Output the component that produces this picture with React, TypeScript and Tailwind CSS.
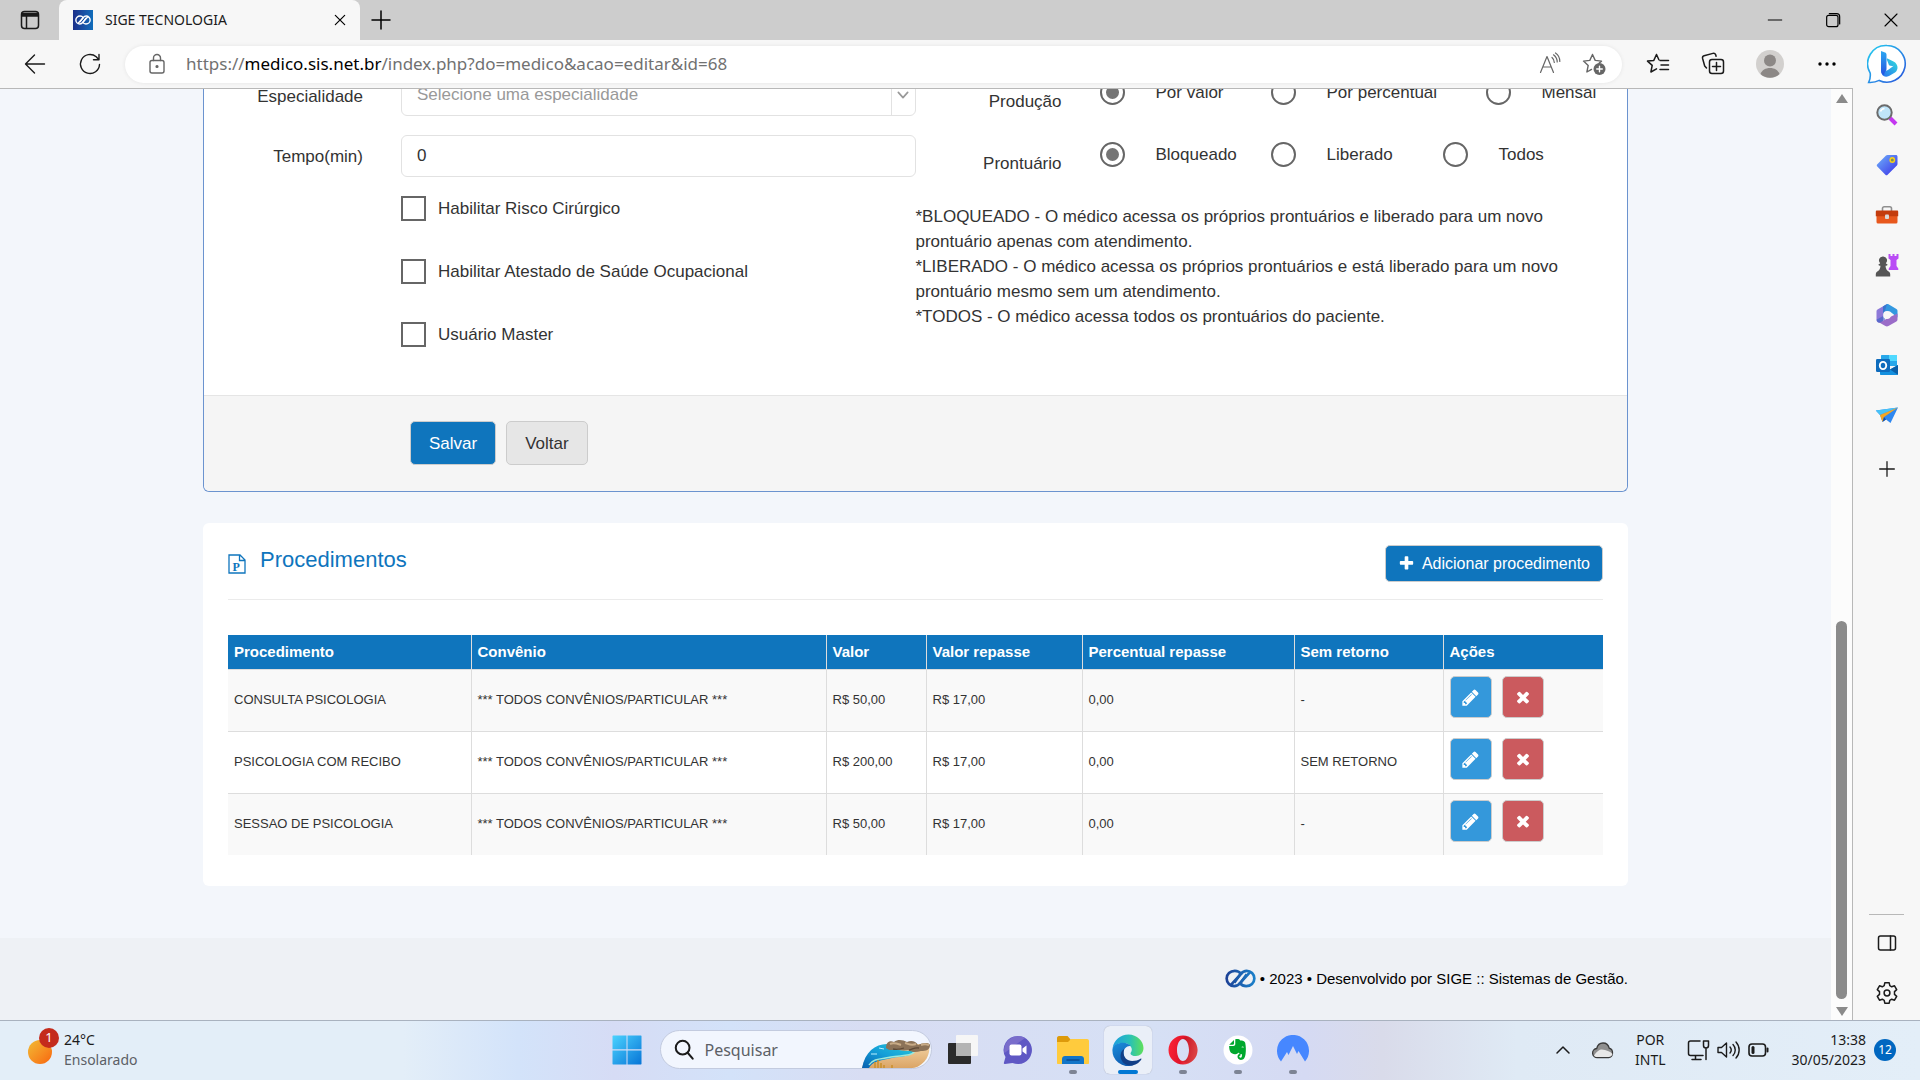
import type { ReactNode } from 'react';

const radioRows = [
  {
    name: 'producao',
    label: 'Produção',
    options: [
      { text: 'Por valor', width: 'w-[171px]' },
      { text: 'Por percentual', width: 'w-[215px]' },
      { text: 'Mensal', width: '' },
    ],
  },
  {
    name: 'prontuario',
    label: 'Prontuário',
    options: [
      { text: 'Bloqueado', width: 'w-[171px]' },
      { text: 'Liberado', width: 'w-[172px]' },
      { text: 'Todos', width: '' },
    ],
  },
];

const checks = [
  { id: 'risco', text: 'Habilitar Risco Cirúrgico' },
  { id: 'atestado', text: 'Habilitar Atestado de Saúde Ocupacional' },
  { id: 'master', text: 'Usuário Master' },
];

const columns = [
  { title: 'Procedimento', width: 'w-[243px]' },
  { title: 'Convênio', width: 'w-[355px]' },
  { title: 'Valor', width: 'w-[100px]' },
  { title: 'Valor repasse', width: 'w-[156px]' },
  { title: 'Percentual repasse', width: 'w-[212px]' },
  { title: 'Sem retorno', width: 'w-[149px]' },
  { title: 'Ações', width: '' },
];

const rows = [
  ['CONSULTA PSICOLOGIA', '*** TODOS CONVÊNIOS/PARTICULAR ***', 'R$ 50,00', 'R$ 17,00', '0,00', '-'],
  ['PSICOLOGIA COM RECIBO', '*** TODOS CONVÊNIOS/PARTICULAR ***', 'R$ 200,00', 'R$ 17,00', '0,00', 'SEM RETORNO'],
  ['SESSAO DE PSICOLOGIA', '*** TODOS CONVÊNIOS/PARTICULAR ***', 'R$ 50,00', 'R$ 17,00', '0,00', '-'],
];

/* ---------- Icons ---------- */

function Line({ size = 24, width = 1.3, className = '', children }: { size?: number; width?: number; className?: string; children: ReactNode }) {
  return (
    <svg
      width={size}
      height={size}
      viewBox="0 0 24 24"
      fill="none"
      stroke="currentColor"
      strokeWidth={width}
      strokeLinecap="round"
      strokeLinejoin="round"
      className={`shrink-0 ${className}`}
    >
      {children}
    </svg>
  );
}

function Awesome({ d, size }: { d: string; size: number }) {
  return (
    <svg width={size} height={size} viewBox="0 0 1792 1792" fill="currentColor" className="shrink-0">
      <path d={d} />
    </svg>
  );
}

const PENCIL =
  'M491 1536l91-91-235-235-91 91v107h128v128h107zm523-928q0-22-22-22-10 0-17 7l-542 542q-7 7-7 17 0 22 22 22 10 0 17-7l542-542q7-7 7-17zm-54-192l416 416-832 832h-416v-416zm683 96q0 53-37 90l-166 166-416-416 166-165q36-38 90-38 53 0 91 38l235 234q37 39 37 91z';
const TIMES =
  'M1490 1322q0 40-28 68l-136 136q-28 28-68 28t-68-28l-294-294-294 294q-28 28-68 28t-68-28l-136-136q-28-28-28-68t28-68l294-294-294-294q-28-28-28-68t28-68l136-136q28-28 68-28t68 28l294 294 294-294q28-28 68-28t68 28l136 136q28 28 28 68t-28 68l-294 294 294 294q28 28 28 68z';
const PLUS =
  'M1600 736v192q0 40-28 68t-68 28h-416v416q0 40-28 68t-68 28h-192q-40 0-68-28t-28-68v-416h-416q-40 0-68-28t-28-68v-192q0-40 28-68t68-28h416v-416q0-40 28-68t68-28h192q40 0 68 28t28 68v416h416q40 0 68 28t28 68z';

function SigeMark({ stroke, width, height }: { stroke: string; width: number; height: number }) {
  return (
    <svg width={width} height={height} viewBox="0 0 30 18" fill="none" stroke={stroke} strokeWidth="2.6" className="shrink-0">
      <defs>
        <linearGradient id="sige" x1="0" y1="0" x2="30" y2="0" gradientUnits="userSpaceOnUse">
          <stop offset="0" stopColor="#1c3f94" />
          <stop offset="1" stopColor="#1b83cc" />
        </linearGradient>
      </defs>
      <path d="M5.500 15.500 15.500 4.500C14 2.500 12 1.600 9.500 1.600 5 1.600 1.600 4.800 1.600 9S5 16.400 9 16.400c3 0 4.600-1.500 6-3.100L21 4.900" />
      <path d="M24.500 2.500 14.500 13.500c1.500 2 3.500 2.900 6 2.900 4.500 0 7.900-3.200 7.900-7.400S25 1.600 21 1.600c-3 0-4.600 1.500-6 3.100L9 13.100" />
    </svg>
  );
}

const BackIcon = () => (
  <Line size={24} width={1.4}>
    <path d="M21.500 12H3M11.500 3 2.500 12l9 9" />
  </Line>
);

const RefreshIcon = () => (
  <Line size={24} width={1.4}>
    <path d="M21.500 12.500a9.500 9.500 0 1 1-3.300-7.700l2.500 2.700M21 2.500v5.300h-5.500" />
  </Line>
);

const LockIcon = () => (
  <Line size={24} width={1.4} className="text-[#666]">
    <rect x="5" y="8.500" width="14" height="12.500" rx="2" />
    <path d="M8.500 8.500V6a3.500 3.500 0 0 1 7 0v2.500" />
    <circle cx="12" cy="14.500" r="0.900" fill="currentColor" />
  </Line>
);

const ReadAloudIcon = () => (
  <Line size={24} width={1.2} className="text-[#666]">
    <path d="m2.500 20.500 6.500-16 6.500 16M4.800 15h8.400" />
    <path d="M14 5.500c1.500 1.300 2.300 3 2.300 5M15.500 2.800c2.300 1.700 3.700 4.300 3.700 7.200M17.500 1c2.800 1.900 4.300 5 4.300 8.500" />
  </Line>
);

const StarAddIcon = () => (
  <Line size={24} width={1.4} className="text-[#666]">
    <path d="m10.500 2.500 2.700 5.900 6.300.7-2.500 2.200M10.500 2.500 7.800 8.400l-6.300.7 4.700 4.300-1.300 6.600 4.600-2.600" />
    <circle cx="17.500" cy="17" r="6" fill="#666" stroke="none" />
    <path d="M17.500 14.200v5.600M14.700 17h5.600" stroke="#fff" />
  </Line>
);

const FavoritesIcon = () => (
  <Line size={24} width={1.5}>
    <path d="m10.500 2.500 2.400 5.200M10.500 2.500 7.800 8.400l-6.300.7 4.700 4.300-1.300 6.600 5.600-3.200" />
    <path d="M14 8.500h8.500M15 13h7.500M14 17.500h8.500" />
  </Line>
);

const CollectionsIcon = () => (
  <Line size={24} width={1.5}>
    <rect x="8.500" y="7.500" width="14" height="14" rx="2.500" />
    <path d="M15.500 10.500v8M11.500 14.500h8" />
    <path d="m5.500 16-1.800-2L1.600 6.500c-.3-1.300.3-2.400 1.500-2.700l8.800-2.400c1.200-.3 2.300.2 2.800 1.400l.4 1.500" />
  </Line>
);

const Avatar = () => (
  <svg width="28" height="28" viewBox="0 0 28 28" className="shrink-0">
    <circle cx="14" cy="14" r="14" fill="#d2d0ce" />
    <circle cx="14" cy="10.500" r="6" fill="#8c8886" />
    <path d="M4.500 24c1.500-4 5-6 9.500-6s8 2 9.500 6a14 14 0 0 1-19 0z" fill="#8c8886" />
  </svg>
);

const BingIcon = () => (
  <svg width="40" height="40" viewBox="0 0 40 40">
    <defs>
      <linearGradient id="bingRing" x1="0" y1="0" x2="1" y2="1">
        <stop offset="0" stopColor="#25d0f0" />
        <stop offset="1" stopColor="#2a52dc" />
      </linearGradient>
      <linearGradient id="bingStem" x1="0" y1="0" x2="0" y2="1">
        <stop offset="0" stopColor="#2aa8f2" />
        <stop offset="1" stopColor="#2553e0" />
      </linearGradient>
      <linearGradient id="bingBowl" x1="0" y1="1" x2="1" y2="0">
        <stop offset="0" stopColor="#2a6ff0" />
        <stop offset="1" stopColor="#30dfdc" />
      </linearGradient>
    </defs>
    <path d="M20 1.500a18.300 18.300 0 1 1-7.800 34.900c-3 1.600-6.700 2.200-10.500 2 1.300-2.800 1.900-6 1.500-9.300A18.300 18.300 0 0 1 20 1.500z" fill="#fff" stroke="url(#bingRing)" strokeWidth="1.600" />
    <path d="M14.300 27c3 1.500 6.700-.5 12.700-5.500-1.500 1-3.500.5-5-.3l-2.200-5.700c-.3-1 .3-1.200 1.200-.8l5.500 2.700c5 2.600 5.200 8.300 1.500 11.200L22 32c-4.500 2-7.700-.5-7.700-5z" fill="url(#bingBowl)" />
    <path d="m14 7 4 1.600c1 .4 1.500 1.200 1.500 2.300v14.300c0 2-2.500 3-2.500 5.800-2-.6-3-2-3-4.500z" fill="url(#bingStem)" />
  </svg>
);

const LoupeIcon = () => (
  <svg width="24" height="24" viewBox="0 0 24 24">
    <path d="m15 15 6 6" stroke="#c437f0" strokeWidth="4" />
    <circle cx="9.500" cy="9.500" r="7.200" fill="#bfe5fa" stroke="#6b6b6b" strokeWidth="2" />
    <path d="M5.500 8.500a4.500 4.500 0 0 1 4-3" stroke="#fff" strokeWidth="1.500" fill="none" />
  </svg>
);

const TagIcon = () => (
  <svg width="24" height="24" viewBox="0 0 24 24">
    <defs>
      <linearGradient id="tag" x1="0" y1="0" x2="1" y2="1">
        <stop offset="0" stopColor="#6fb4fb" />
        <stop offset="1" stopColor="#3a2ee6" />
      </linearGradient>
    </defs>
    <path d="M12.500 2h8.300c1 0 1.700.7 1.700 1.700V11c0 .6-.2 1-.6 1.400l-9.300 9.300c-.7.7-1.500.7-2.200 0L2.300 13.500c-.7-.7-.7-1.500 0-2.200L11 2.600c.4-.4.9-.6 1.500-.6z" fill="url(#tag)" />
    <circle cx="17.300" cy="7" r="2.200" fill="#7c8f5c" stroke="#fcd116" strokeWidth="1.400" />
  </svg>
);

const BriefcaseIcon = () => (
  <svg width="24" height="24" viewBox="0 0 24 24">
    <path d="M7.500 8V5.500c0-1 .7-1.700 1.700-1.700h5.600c1 0 1.700.7 1.700 1.700V8" fill="none" stroke="#8f8f8f" strokeWidth="1.600" />
    <rect x="1.500" y="10" width="21" height="10.500" rx="1.500" fill="#e8581d" />
    <path d="M2 7.500h20c.8 0 1.200.5 1.200 1.200v4.600H.8V8.700c0-.7.4-1.200 1.200-1.200z" fill="#c33c0d" />
    <rect x="10" y="11.500" width="4" height="4.500" rx="1" fill="#d9d9d9" />
  </svg>
);

const ChessIcon = () => (
  <svg width="24" height="24" viewBox="0 0 24 24">
    <path d="M13.500 1h2v2h2V1h2v2h2V1h2v4.500l-2 1.500v6l1.800 2.500V17h-9.600v-1.500l1.800-2.500V7l-2-1.500z" fill="#b94cf5" />
    <path d="M8 3.500a4 4 0 0 1 2.800 7c.7.3 1.700.5 1.700 1.300 0 .9-1 1-2 1 .2 3 1.300 4.700 3.500 5.900.8.5 1.200 1.300 1.200 2.300v2.500H.8V21c0-1 .4-1.800 1.200-2.300 2.200-1.200 3.300-2.900 3.500-5.900-1 0-2-.1-2-1 0-.8 1-1 1.700-1.300A4 4 0 0 1 8 3.500z" fill="#565656" />
  </svg>
);

const OfficeIcon = () => (
  <svg width="24" height="24" viewBox="0 0 24 24">
    <path d="M12 1 2.500 6.500c-.7.4-1 1-1 1.800v8.500c0 2.500 2.500 3.700 4.500 2.500l2-1.300V9.500z" fill="#8d79d8" />
    <path d="m12 1-4 2.500v9.500l4-4.500h3l7.500 6V7.800c0-.9-.4-1.500-1.100-1.900L13.500 1.300c-.5-.3-1-.4-1.500-.3z" fill="#3398e0" />
    <path d="M22.500 10.500v6c0 .9-.4 1.500-1.100 1.900l-8 4.600c-1 .6-2 .6-3 0L2.500 18.500c2 1 3.500.6 5-.4L16 13.500z" fill="#9a6cc8" />
    <path d="m8 3.500 4-2.300-2 6.300v9L6 19.300c-1.500.7-4 .2-4.500-2.500L8 13z" fill="#3d63c4" opacity="0.650" />
    <circle cx="12" cy="12" r="3.900" fill="#f7f7f7" />
  </svg>
);

const OutlookIcon = () => (
  <svg width="24" height="24" viewBox="0 0 24 24">
    <path d="M7 2h14c.6 0 1 .4 1 1v10H6V3c0-.6.4-1 1-1z" fill="#28a8ea" />
    <path d="M14 2h8v6h-8z" fill="#50d9ff" />
    <path d="M5 12.500 14 17l9-5v9c0 .6-.4 1-1 1H6c-.6 0-1-.4-1-1z" fill="#1490df" />
    <path d="m23 12-8 4.500 8 5.300z" fill="#0a5fa8" />
    <rect x="1" y="6" width="14" height="13" rx="1.300" fill="#0f6cbd" />
    <ellipse cx="8" cy="12.500" rx="3.200" ry="3.600" fill="none" stroke="#fff" strokeWidth="1.900" />
  </svg>
);

const PlaneIcon = () => (
  <svg width="24" height="24" viewBox="0 0 24 24">
    <path d="M.8 7.500 23 4.500 15.500 20l-4.500-3.500L7.500 19 5 12z" fill="#2e87f0" />
    <path d="M.8 7.500 23 4.500 5 12z" fill="#47c3f7" />
    <path d="m5 12 18-7.500L9 14l-1.500 5z" fill="#f5a623" />
    <path d="m9 14 2 2.500L7.500 19z" fill="#1b4fa0" />
  </svg>
);

const GearIcon = () => (
  <Line size={24} width={1.5}>
    <path d="M9.800 1.800h4.400l.6 2.900 1.900 1.100 2.800-1 2.200 3.800-2.200 2v2.800l2.200 2-2.200 3.800-2.800-1-1.900 1.100-.6 2.900H9.800l-.6-2.900-1.900-1.100-2.800 1-2.200-3.800 2.200-2v-2.800l-2.200-2 2.200-3.800 2.800 1 1.900-1.100z" />
    <circle cx="12" cy="12" r="2.900" />
  </Line>
);

/* ---------- Browser ---------- */

function TabBar() {
  return (
    <div className="flex h-10 shrink-0 items-stretch bg-[#cdcdcd]">
      <button aria-label="Guias" className="flex w-[59px] items-center justify-center rounded-br-md">
        <svg width="20" height="20" viewBox="0 0 20 20" fill="none" stroke="#1b1b1b" strokeWidth="1.500">
          <rect x="1.500" y="1.500" width="17" height="17" rx="3" />
          <path d="M2 3.500h16V6H2z" fill="#1b1b1b" />
          <path d="M6.500 6v12" />
        </svg>
      </button>
      <div className="flex w-[301px] items-center rounded-t-lg bg-[#f7f7f7] pl-[14px] pr-3">
        <span className="flex h-5 w-5 items-center justify-center bg-gradient-to-r from-[#1b2f8a] to-[#0f6dbb]">
          <SigeMark stroke="#fff" width={16} height={10} />
        </span>
        <span className="ml-3 flex-1 pb-px text-[14px] text-[#1b1b1b]">SIGE TECNOLOGIA</span>
        <button aria-label="Fechar guia">
          <Line size={16} width={1.8}>
            <path d="m5 5 14 14M19 5 5 19" />
          </Line>
        </button>
      </div>
      <button aria-label="Nova guia" className="flex w-[42px] items-center justify-center">
        <Line size={24} width={1.5}>
          <path d="M12 3v18M3 12h18" />
        </Line>
      </button>
      <div className="flex-1" />
      <button aria-label="Minimizar" className="flex w-[58px] items-center justify-center">
        <Line size={18} width={1.3}>
          <path d="M3 12h18" />
        </Line>
      </button>
      <button aria-label="Restaurar" className="flex w-[58px] items-center justify-center">
        <Line size={16} width={1.8}>
          <rect x="2.500" y="5" width="17" height="17" rx="3" />
          <path d="M6.500 2.500h11c2.500 0 4.500 2 4.500 4.500v11" />
        </Line>
      </button>
      <button aria-label="Fechar" className="flex w-[58px] items-center justify-center">
        <Line size={18} width={1.5}>
          <path d="m4 4 16 16M20 4 4 20" />
        </Line>
      </button>
    </div>
  );
}

function Toolbar() {
  return (
    <div className="flex h-[49px] shrink-0 items-center border-b border-[#b8b8b8] bg-[#f7f7f7] pl-[23px] text-[#1b1b1b]">
      <button aria-label="Voltar página">
        <BackIcon />
      </button>
      <button aria-label="Atualizar" className="ml-[31px]">
        <RefreshIcon />
      </button>
      <div className="ml-[23px] flex h-[37px] flex-1 items-center rounded-full bg-white pl-5 pr-4 shadow-[0_0_4px_rgba(0,0,0,0.08)]">
        <LockIcon />
        <a href="#url" className="ml-[17px] flex-1 pb-px text-[17px] text-[#717171]">
          https://<span className="text-black">medico.sis.net.br</span>/index.php?do=medico&amp;acao=editar&amp;id=68
        </a>
        <button aria-label="Ler em voz alta" className="mr-5">
          <ReadAloudIcon />
        </button>
        <button aria-label="Adicionar aos favoritos">
          <StarAddIcon />
        </button>
      </div>
      <button aria-label="Favoritos" className="ml-6">
        <FavoritesIcon />
      </button>
      <button aria-label="Coleções" className="ml-[31px]">
        <CollectionsIcon />
      </button>
      <button aria-label="Perfil" className="ml-[31px]">
        <Avatar />
      </button>
      <button aria-label="Mais" className="ml-[31px] mr-[14px]">
        <svg width="24" height="24" viewBox="0 0 24 24">
          <circle cx="5" cy="12" r="1.700" />
          <circle cx="12" cy="12" r="1.700" />
          <circle cx="19" cy="12" r="1.700" />
        </svg>
      </button>
    </div>
  );
}

function EdgeSidebar() {
  return (
    <aside className="flex w-[67px] shrink-0 flex-col items-center bg-[#f7f7f7] pb-[15px] text-[#1b1b1b]">
      <button aria-label="Bing" className="mt-1">
        <BingIcon />
      </button>
      <div className="mt-[19px] flex flex-col gap-[26px]">
        <button aria-label="Pesquisar na barra"><LoupeIcon /></button>
        <button aria-label="Compras"><TagIcon /></button>
        <button aria-label="Ferramentas"><BriefcaseIcon /></button>
        <button aria-label="Jogos"><ChessIcon /></button>
        <button aria-label="Microsoft 365"><OfficeIcon /></button>
        <button aria-label="Outlook"><OutlookIcon /></button>
        <button aria-label="Drop"><PlaneIcon /></button>
      </div>
      <button aria-label="Personalizar" className="mt-[31px]">
        <Line size={22} width={1.4}>
          <path d="M12 4v16M4 12h16" />
        </Line>
      </button>
      <div className="flex-1" />
      <div className="h-px w-[35px] bg-[#b8b8b8]" />
      <button aria-label="Ocultar barra" className="mt-4">
        <Line size={24} width={1.5}>
          <rect x="3.500" y="5" width="17" height="14" rx="2" />
          <path d="M15.500 5v14" />
        </Line>
      </button>
      <button aria-label="Configurações" className="mt-[26px]">
        <GearIcon />
      </button>
    </aside>
  );
}

/* ---------- Page ---------- */

function DoctorForm() {
  return (
    <form className="rounded-b-md border border-t-0 border-[#6b93cf] bg-white">
      <div className="-mt-4 grid grid-cols-2 pb-12">
        <div className="flex flex-col gap-[19px]">
          <div className="flex items-center">
            <label htmlFor="especialidade" className="mr-[38px] w-[159px] pt-1 text-right">Especialidade</label>
            <div className="flex h-[43px] flex-1 rounded-md border border-[#e2e2e2]">
              <select id="especialidade" className="flex-1 appearance-none bg-transparent pl-[15px] text-[#999] outline-none">
                <option>Selecione uma especialidade</option>
              </select>
              <span className="flex w-6 items-center justify-center border-l border-[#e2e2e2] text-[#999]">
                <Line size={16} width={2.5}>
                  <path d="m5 8 7 8 7-8" />
                </Line>
              </span>
            </div>
          </div>
          <div className="flex items-center">
            <label htmlFor="tempo" className="mr-[38px] w-[159px] pt-px text-right">Tempo(min)</label>
            <input id="tempo" type="text" defaultValue="0" className="h-[42px] min-w-0 flex-1 rounded-md border border-[#e2e2e2] px-[15px] outline-none" />
          </div>
          <div className="ml-[197px] flex flex-col gap-[38px]">
            {checks.map((c) => (
              <label key={c.id} className="flex h-[25px] items-center gap-3">
                <input type="checkbox" id={c.id} className="h-[25px] w-[25px] appearance-none border-2 border-[#666] bg-white" />
                {c.text}
              </label>
            ))}
          </div>
        </div>
        <div>
          {radioRows.map((row) => (
            <fieldset key={row.name} className="flex h-[62px] items-start">
              <span className="mr-[38px] mt-4 w-[146px] text-right">{row.label}</span>
              {row.options.map((o, i) => (
                <label key={o.text} className={`flex h-[38px] shrink-0 items-center ${o.width}`}>
                  <input
                    type="radio"
                    name={row.name}
                    defaultChecked={i === 0}
                    className="mr-[31px] h-[25px] w-[25px] appearance-none rounded-full border-2 border-[#666] p-1 checked:bg-[#757575] checked:bg-clip-content"
                  />
                  {o.text}
                </label>
              ))}
            </fieldset>
          ))}
          <p className="mt-[7px]">
            *BLOQUEADO - O médico acessa os próprios prontuários e liberado para um novo
            <br />
            prontuário apenas com atendimento.
            <br />
            *LIBERADO - O médico acessa os próprios prontuários e está liberado para um novo
            <br />
            prontuário mesmo sem um atendimento.
            <br />
            *TODOS - O médico acessa todos os prontuários do paciente.
          </p>
        </div>
      </div>
      <div className="flex gap-[10px] rounded-b-md border-t border-[#e5e5e5] bg-[#f5f5f5] pb-[26px] pl-[206px] pt-[25px]">
        <button type="button" className="h-[44px] rounded-[5px] border border-[#ccc] bg-[#0f75bd] px-[18px] text-white">
          Salvar
        </button>
        <button type="button" className="h-[44px] rounded-[5px] border border-[#ccc] bg-[#e6e6e6] px-[18px] text-[#333]">
          Voltar
        </button>
      </div>
    </form>
  );
}

function Procedures() {
  return (
    <section className="mt-[31px] rounded-md bg-white px-[25px] pb-[31px] pt-[22px]">
      <div className="flex items-center border-b border-[#ebebeb] pb-[17px]">
        <svg width="18" height="20" viewBox="0 0 18 20" fill="none" stroke="#0f75bd" strokeWidth="1.300">
          <path d="M1 1h11l5 5v13H1zM11.500 1v5.500H17" />
          <text x="4.500" y="16.500" fontSize="12" fontWeight="bold" fontFamily="Liberation Serif" fill="#0f75bd" stroke="none">P</text>
        </svg>
        <h2 className="ml-[14px] flex-1 pb-2 text-[22px] text-[#0f75bd]">Procedimentos</h2>
        <button className="flex h-[37px] items-center gap-[7px] rounded-[5px] border border-[#ccc] bg-[#0f75bd] px-3 text-[16px] text-white">
          <Awesome d={PLUS} size={17} />
          Adicionar procedimento
        </button>
      </div>
      <table className="mt-[35px] w-full table-fixed border-collapse">
        <thead>
          <tr className="h-[34px] bg-[#0f75bd] text-left text-[15px] text-white">
            {columns.map((c) => (
              <th key={c.title} className={`border-l border-[#ddd] px-[6px] font-bold first:border-l-0 ${c.width}`}>
                {c.title}
              </th>
            ))}
          </tr>
        </thead>
        <tbody>
          {rows.map((row) => (
            <tr key={row[0]} className="h-[62px] border-t border-[#ddd] text-[13px] odd:bg-[#f9f9f9]">
              {row.map((cell, i) => (
                <td key={i} className="whitespace-nowrap border-l border-[#ddd] px-[6px] pb-[2px] first:border-l-0">
                  {cell}
                </td>
              ))}
              <td className="border-l border-[#ddd] px-[6px]">
                <div className="flex gap-[10px] pb-[6px] text-white">
                  <button aria-label="Editar" className="flex h-[42px] w-[42px] items-center justify-center rounded-[5px] border border-[#ccc] bg-[#3498db]">
                    <Awesome d={PENCIL} size={19} />
                  </button>
                  <button aria-label="Excluir" className="flex h-[42px] w-[42px] items-center justify-center rounded-[5px] border border-[#ccc] bg-[#cb5a5e]">
                    <Awesome d={TIMES} size={18} />
                  </button>
                </div>
              </td>
            </tr>
          ))}
        </tbody>
      </table>
    </section>
  );
}

function Scrollbar() {
  return (
    <div className="flex w-[21px] shrink-0 flex-col items-center bg-[#fcfcfc] pb-1 pt-[5px]">
      <svg width="12" height="9" viewBox="0 0 12 9" fill="#8b8b8b">
        <path d="M6 0 12 9H0z" />
      </svg>
      <div className="flex-[517]" />
      <div className="w-[11px] flex-[378] rounded-full bg-[#8b8b8b]" />
      <svg width="12" height="9" viewBox="0 0 12 9" fill="#8b8b8b" className="mt-2">
        <path d="M6 9 0 0h12z" />
      </svg>
    </div>
  );
}

/* ---------- Taskbar ---------- */

const WindowsIcon = () => (
  <svg width="30" height="30" viewBox="0 0 30 30">
    <defs>
      <linearGradient id="win" x1="0" y1="0" x2="30" y2="30" gradientUnits="userSpaceOnUse">
        <stop offset="0" stopColor="#4cd4ff" />
        <stop offset="1" stopColor="#0673d6" />
      </linearGradient>
    </defs>
    <path d="M1 .5h13.500v13.800H.5V1zM15.500.5H29l.5.5v13.300h-14zM.5 15.500h14v14H1l-.5-.5zM15.500 15.500h14V29l-.5.5H15.500z" fill="url(#win)" />
  </svg>
);

const BeachIcon = () => (
  <svg width="70" height="28" viewBox="0 0 70 28">
    <defs>
      <linearGradient id="sand" x1="0" y1="0" x2="0" y2="1">
        <stop offset="0" stopColor="#f3d3a4" />
        <stop offset="1" stopColor="#dba566" />
      </linearGradient>
      <linearGradient id="sea" x1="0" y1="1" x2="1" y2="0">
        <stop offset="0" stopColor="#0860b0" />
        <stop offset="0.500" stopColor="#149fd8" />
        <stop offset="1" stopColor="#28c8d8" />
      </linearGradient>
    </defs>
    <path d="M1 28C5 12 15 4 30 4h38c2 11-4 20-14 24z" fill="url(#sand)" />
    <path d="M1 28C4 12 14 4 26 4c3 4 9 7 27 7-3 6-12 5-22 7-9 2-20 3-23 10z" fill="url(#sea)" />
    <path d="M8 25c4-7 14-6 22-8 9-2 20 0 24-6" fill="none" stroke="#9ce8dc" strokeWidth="1.500" />
    <path d="M10 14h6M18 8l5 1" stroke="#b8f0ff" strokeWidth="1" />
    <path d="M25 8c0-5 3-8 8-6 4-3 9-2 13 0 4-2 9-1 11 3 4-2 11-3 12 0 0 5-4 6-9 6-4 1-8 2-13-1-5 1-9 0-12-1-4 2-8 1-10-1z" fill="#8c7358" />
    <path d="M29 4c4-2 8 0 11 1M44 3c4 1 6 3 11 1M60 5c3-1 5-1 8 0" stroke="#c8ab86" strokeWidth="2" fill="none" />
    <path d="M32 9c4 1 8 0 11-1M48 10c4-1 6-3 10-2" stroke="#5d4936" strokeWidth="1.300" fill="none" />
    <path d="M14 28v-6M17 28v-8M20 28v-5M23 28v-3M31 28v-3" stroke="#c88f2b" strokeWidth="1.500" />
  </svg>
);

const TaskViewIcon = () => (
  <svg width="30" height="30" viewBox="0 0 30 30">
    <rect x="0" y="8" width="23" height="21" rx="1" fill="#2b2b2b" />
    <rect x="8" y="0" width="22" height="21" rx="1" fill="#f6f6f6" />
    <path d="M8 8h15v13H8z" fill="#b4b4b4" />
  </svg>
);

const ChatIcon = () => (
  <svg width="30" height="30" viewBox="0 0 30 30">
    <path d="M15 1a14 14 0 1 1-5.500 26.900L2 29c-1 .1-1.400-.4-1.100-1.300L2.500 22A14 14 0 0 1 15 1z" fill="#5f58c4" />
    <path d="M15 1A14 14 0 0 0 1.500 18L22 3c-2-1.300-4.500-2-7-2z" fill="#8b7bd0" opacity="0.600" />
    <rect x="6.500" y="9.500" width="12" height="11" rx="2" fill="#fff" />
    <path d="m19.500 13.500 4-3v9l-4-3z" fill="#fff" />
  </svg>
);

const ExplorerIcon = () => (
  <svg width="32" height="30" viewBox="0 0 32 30">
    <path d="M0 3c0-1 .7-2 2-2h8.500l3.500 4v4H0z" fill="#dd9a0b" />
    <path d="M0 7h11l3-3h16c1.200 0 2 .8 2 2v22c0 .6-.4 1-1 1H1c-.6 0-1-.4-1-1z" fill="#ffcb3d" />
    <path d="M5 29v-5c0-1.700 1.300-3 3-3h16c1.700 0 3 1.300 3 3v5z" fill="#1275c8" />
    <path d="M10 25h12" stroke="#0a4b91" strokeWidth="1.500" strokeLinecap="round" />
  </svg>
);

const EdgeIcon = () => (
  <svg width="32" height="32" viewBox="0 0 32 32">
    <defs>
      <linearGradient id="edgeTop" x1="0" y1="0.500" x2="1" y2="0.500">
        <stop offset="0" stopColor="#1e9de0" />
        <stop offset="0.550" stopColor="#28c0b8" />
        <stop offset="1" stopColor="#5fe05a" />
      </linearGradient>
      <linearGradient id="edgeLeft" x1="0" y1="0" x2="0.500" y2="1">
        <stop offset="0" stopColor="#1b8fdc" />
        <stop offset="1" stopColor="#0f5bb0" />
      </linearGradient>
    </defs>
    <path d="M.6 14C2 6 8.500.5 16.500.5 25 .5 31.500 7 31.500 14c0 5-3.500 8-7.500 8-3.500 0-5.500-1.300-5.500-2.600 0-.9 1.300-1.500 1.300-3.900 0-3-3.300-6.500-8.300-6.500-5 0-9 2-10.900 5z" fill="url(#edgeTop)" />
    <path d="M.5 15C1 11 5.500 8.700 11 8.700c3.500 0 6.300 1.300 7.700 3.300-3.500-.7-7.200 2.300-7.200 7 0 6 4.500 11.300 10 12A15.500 15.500 0 0 1 .5 15z" fill="url(#edgeLeft)" />
    <path d="M11.600 18c-.4 5 3.500 9 8.500 9 3.500 0 6-1 8.400-2.300.7-.4 1.200.2.8.8-2.200 3.400-6 6-10.800 6C12 31.500 8 26 8.600 21c.3-3 1.700-5 3.500-6z" fill="#123f87" />
  </svg>
);

const OperaIcon = () => (
  <svg width="30" height="30" viewBox="0 0 30 30">
    <defs>
      <linearGradient id="opera" x1="0" y1="0" x2="1" y2="0.200">
        <stop offset="0" stopColor="#ff2638" />
        <stop offset="0.550" stopColor="#e0142a" />
        <stop offset="1" stopColor="#fb5a5a" />
      </linearGradient>
    </defs>
    <path d="M15 .5a14.500 14.500 0 1 0 0 29 14.500 14.500 0 1 0 0-29zm0 3.500c3.600 0 6 5 6 11s-2.400 11-6 11-6-5-6-11 2.400-11 6-11z" fill="url(#opera)" fillRule="evenodd" />
    <path d="M15 4c2-2 5-2.500 7.500-1.300C27 5.300 29.500 10 29.500 15s-2.500 9.700-7 12.300C20 28.500 17 28 15 26c3.600 0 6-5 6-11S18.600 4 15 4z" fill="#a01018" opacity="0.350" />
  </svg>
);

const EvernoteIcon = () => (
  <svg width="30" height="30" viewBox="0 0 30 30">
    <circle cx="15" cy="15" r="14.500" fill="#fff" />
    <path d="M11 5v3.500c0 .8-.5 1.200-1.200 1.200H6.200zM12.300 4.300c2-.5 4.200-.2 5 1.200 2.200 0 4.500.5 4.900 2.300.7 3.500.9 7.400.4 11-.5 3.700-1.600 6.200-4.700 6.200-2.400 0-3.400-1.700-3.400-3.400 0-1.600 1.200-2.900 2.900-2.900v2c-.8 0-1.100.4-1.100.9 0 .7.500 1.200 1.300 1.200 1 0 1.400-.9 1.400-3.800-1 .4-2.900.2-3.600-1.500-.7 1.300-2 1.900-3.500 1.700-4-.4-5.600-2.300-5.800-8.200h4.200c1.200 0 2-.8 2-2z" fill="#00a82d" />
    <path d="M18.300 12.300c.6-1 2.200-1 2.600.3z" fill="#fff" />
  </svg>
);

const NordIcon = () => (
  <svg width="32" height="30" viewBox="0 0 32 30">
    <path d="M4 26.500A16 16 0 1 1 28 26.500L21.500 16l-1.500 3-4-8-4.500 9-1.500-3z" fill="#4687ff" />
  </svg>
);

function TaskButton({ label, children, active = false, running = true }: { label: string; children: ReactNode; active?: boolean; running?: boolean }) {
  return (
    <button
      aria-label={label}
      className={`relative flex h-12 w-12 items-center justify-center rounded-md ${active ? 'bg-[#eaeff8] shadow-[0_0_1px_rgba(0,0,0,0.3)]' : ''}`}
    >
      {children}
      {running && (
        <span className={`absolute bottom-0 h-1 rounded-full ${active ? 'w-5 bg-[#0078d4]' : 'w-2 bg-[#7d8494]'}`} />
      )}
    </button>
  );
}

function Taskbar() {
  return (
    <footer className="grid h-[60px] shrink-0 grid-cols-[1fr_auto_1fr] items-center border-t border-[#a9b2bf] bg-[linear-gradient(90deg,#e3eef8_0%,#e3eef8_21%,#d3e3fa_27%,#d6dcf5_32%,#d3e2f9_38%,#d8ddf3_45%,#d6e0f5_60%,#d5daf3_68%,#d9dbea_72%,#dfeaf5_79%,#e3eef8_100%)] pb-[2px] text-[#1b1b1b]">
      <div className="flex items-center pl-7">
        <div className="relative h-9 w-9">
          <span className="absolute bottom-1 left-0 h-6 w-6 rounded-full bg-gradient-to-br from-[#f0bb35] to-[#f7630c]" />
          <span className="absolute -top-1 left-[11px] flex h-5 w-5 items-center justify-center rounded-full bg-[#c42b1c] text-[13px] text-white">1</span>
        </div>
        <div className="text-[14px] leading-5">
          <div>24°C</div>
          <div className="text-[#5c6066]">Ensolarado</div>
        </div>
      </div>

      <div className="flex items-center pl-2">
        <button aria-label="Iniciar" className="mr-[18px]">
          <WindowsIcon />
        </button>
        <label className="mr-[7px] flex h-[39px] w-[272px] items-center overflow-hidden rounded-full border border-[#c3cbdf] bg-[#f2f6fe] pl-3">
          <Line size={22} width={2.2}>
            <circle cx="10.500" cy="9.500" r="7.500" />
            <path d="m16 15 5.500 6.500" />
          </Line>
          <input type="text" aria-label="Pesquisar" placeholder="Pesquisar" className="ml-[10px] w-0 flex-1 bg-transparent text-[16px] outline-none placeholder:text-[#5c6066]" />
          <span className="self-end">
            <BeachIcon />
          </span>
        </label>
        <div className="flex gap-[7px]">
          <TaskButton label="Visão de tarefas" running={false}><TaskViewIcon /></TaskButton>
          <TaskButton label="Chat" running={false}><ChatIcon /></TaskButton>
          <TaskButton label="Explorador"><ExplorerIcon /></TaskButton>
          <TaskButton label="Edge" active><EdgeIcon /></TaskButton>
          <TaskButton label="Opera"><OperaIcon /></TaskButton>
          <TaskButton label="Evernote"><EvernoteIcon /></TaskButton>
          <TaskButton label="NordVPN"><NordIcon /></TaskButton>
        </div>
      </div>

      <div className="flex items-center justify-end pr-6">
        <Line size={18} width={2}>
          <path d="m4 16 8-8 8 8" />
        </Line>
        <svg width="24" height="24" viewBox="0 0 24 24" className="ml-[19px]">
          <path d="M6.500 19.500a4.500 4.500 0 0 1-.8-9C6.500 7 9 5 12 5s5.500 2 6.200 5.200a4.800 4.800 0 0 1-.7 9.300z" fill="#8f8f8f" stroke="#3a3a3a" strokeWidth="1.300" />
          <path d="M3 17.500c4-6 7-7 11-5.500 3 1 5.500 1.500 7.500 4-.5 2-2 3-4 3h-11c-1.500 0-2.800-.5-3.500-1.500z" fill="#e8e8e8" />
        </svg>
        <div className="ml-[20px] text-center text-[14px] leading-5">
          <div>POR</div>
          <div>INTL</div>
        </div>
        <div className="ml-[20px] flex gap-[6px]">
          <Line size={24} width={1.5}>
            <path d="M14 3H4.500C3.500 3 2.500 4 2.500 5v10.500c0 1 1 2 2 2H17M9.500 17.500V21M6 21.500h9" />
            <path d="M17.500 3h5v4.500a2.500 2.500 0 0 1-5 0zM20 10v11.500" />
          </Line>
          <Line size={24} width={1.4}>
            <path d="M2 9.500v5h3.500l5 4.500V5l-5 4.500zM14 9c1.500 1.800 1.500 4.200 0 6M17 6.500c3 3.200 3 7.800 0 11M20 4c4.200 4.600 4.200 11.400 0 16" />
          </Line>
          <Line size={24} width={1.6}>
            <rect x="3" y="6" width="16.500" height="12" rx="3" />
            <path d="M7 9.500v5" strokeWidth="3" />
            <path d="M21.500 10.500v3" strokeWidth="2" />
          </Line>
        </div>
        <div className="ml-[22px] text-right text-[14px] leading-5">
          <div>13:38</div>
          <div>30/05/2023</div>
        </div>
        <span className="ml-2 flex h-[22px] w-[22px] items-center justify-center rounded-full bg-[#0067c0] text-[12px] text-white">12</span>
      </div>
    </footer>
  );
}

export default function App() {
  return (
    <div className="flex h-screen flex-col overflow-hidden bg-[#f7f7f7] font-['Noto_Sans','Open_Sans',sans-serif]">
      <TabBar />
      <div className="flex min-h-0 flex-1">
        <div className="flex min-w-0 flex-1 flex-col">
          <Toolbar />
          <div className="flex min-h-0 flex-1 border-r border-[#b8b8b8]">
            <main className="flex flex-1 flex-col overflow-hidden bg-[#f3f6fb] font-['Liberation_Sans',Arial,sans-serif] text-[17px] leading-[25px] text-[#333]">
              <div className="px-[203px]">
                <DoctorForm />
                <Procedures />
              </div>
              <div className="mt-auto flex h-[82px] shrink-0 items-center justify-end gap-1 bg-[#eef1f5] px-[203px] pb-[2px] text-[15px] text-black">
                <SigeMark stroke="url(#sige)" width={31} height={19} />
                <span>• 2023 • Desenvolvido por SIGE :: Sistemas de Gestão.</span>
              </div>
            </main>
            <Scrollbar />
          </div>
        </div>
        <EdgeSidebar />
      </div>
      <Taskbar />
    </div>
  );
}
